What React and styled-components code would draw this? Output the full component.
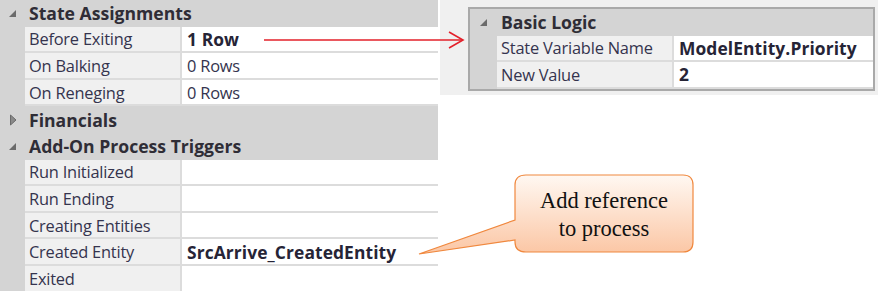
import styled, { createGlobalStyle } from 'styled-components'

const GlobalStyle = createGlobalStyle`
    html, body {
        margin: 0;
        padding: 0;
        background: #ffffff;
    }
    body {
        font-family: "Open Sans", "Noto Sans", sans-serif;
    }
`

const Page = styled.div`
    position: relative;
    width: 878px;
    height: 291px;
    overflow: hidden;
    display: flex;
    align-items: flex-start;
    gap: 2px;
    background: #ffffff;
`

const Grid = styled.div`
    width: ${({ width }) => width};
    background: #d4d4d4;
    display: flex;
    flex-direction: column;
`

const RightArea = styled.div`
    flex: 1;
    background: #f0f0f0;
    padding: 7px 3px 4px 28px;
`

const Frame = styled.div`
    border: 2px solid #a9a9a9;
`

const Header = styled.div`
    height: 26.6px;
    display: flex;
    align-items: center;
    font-weight: 700;
    font-size: 17.6px;
    color: #2f2d36;
    letter-spacing: 0;
    white-space: nowrap;
`

const Toggle = styled.span`
    width: ${({ gutter }) => gutter + 4}px;
    display: flex;
    justify-content: center;
    padding-right: 4px;
    box-sizing: border-box;
`

const Row = styled.div`
    margin-left: ${({ gutter }) => gutter}px;
    height: 26.6px;
    box-sizing: border-box;
    display: grid;
    grid-template-columns: ${({ labelWidth }) => labelWidth} 1fr;
    column-gap: 2px;
    background: #dcdcdc;
    border-bottom: 2px solid #dcdcdc;
`

const Label = styled.div`
    background: #f0f0f0;
    display: flex;
    align-items: center;
    padding-left: 4px;
    font-size: 16.4px;
    color: #35344e;
    letter-spacing: -0.2px;
    white-space: nowrap;
`

const Value = styled.div`
    background: #ffffff;
    display: flex;
    align-items: center;
    padding-left: 5px;
    font-size: ${({ bold }) => (bold ? '17.4px' : '16.4px')};
    font-weight: ${({ bold }) => (bold ? 700 : 400)};
    color: ${({ bold }) => (bold ? '#262436' : '#35344e')};
    letter-spacing: ${({ bold }) => (bold ? '0.1px' : '-0.2px')};
    white-space: nowrap;
`

const Overlay = styled.svg`
    position: absolute;
    left: 0;
    top: 0;
    pointer-events: none;
`

const CalloutText = styled.div`
    position: absolute;
    left: 515px;
    top: 187px;
    width: 178px;
    text-align: center;
    font-family: "Liberation Serif", "Times New Roman", serif;
    font-size: 22.5px;
    line-height: 28px;
    color: #111111;
`

const Expanded = () => (
    <svg width="9" height="9" viewBox="0 0 9 9">
        <path d="M8 1 L8 8 L1 8 Z" fill="#6b6b6b" />
    </svg>
)

const Collapsed = () => (
    <svg width="8" height="12" viewBox="0 0 8 12">
        <path d="M1.5 1 L7 6 L1.5 11 Z" fill="#8a8a8a" stroke="#6b6b6b" strokeWidth="1" />
    </svg>
)

const Section = ({ title, open = true, gutter = 25 }) => (
    <Header>
        <Toggle gutter={gutter}>{open ? <Expanded /> : <Collapsed />}</Toggle>
        {title}
    </Header>
)

const Prop = ({ label, value, bold, labelWidth = '155px', gutter = 25 }) => (
    <Row labelWidth={labelWidth} gutter={gutter}>
        <Label>{label}</Label>
        <Value bold={bold}>{value}</Value>
    </Row>
)

const App = () => {
    return (
        <>
            <GlobalStyle />
            <Page>
                <Grid width="438px">
                    <Section title="State Assignments" />
                    <Prop label="Before Exiting" value="1 Row" bold />
                    <Prop label="On Balking" value="0 Rows" />
                    <Prop label="On Reneging" value="0 Rows" />
                    <Section title="Financials" open={false} />
                    <Section title="Add-On Process Triggers" />
                    <Prop label="Run Initialized" value="" />
                    <Prop label="Run Ending" value="" />
                    <Prop label="Creating Entities" value="" />
                    <Prop label="Created Entity" value="SrcArrive_CreatedEntity" bold />
                    <Prop label="Exited" value="" />
                </Grid>
                <RightArea>
                    <Frame>
                        <Grid width="100%">
                            <Section title="Basic Logic" gutter={27} />
                            <Prop label="State Variable Name" value="ModelEntity.Priority" bold labelWidth="175px" gutter={27} />
                            <Prop label="New Value" value="2" bold labelWidth="175px" gutter={27} />
                        </Grid>
                    </Frame>
                </RightArea>

                <Overlay width="878" height="291">
                    <defs>
                        <linearGradient id="calloutFill" x1="0" y1="0" x2="0" y2="1">
                            <stop offset="0" stopColor="#fff8f2" />
                            <stop offset="1" stopColor="#fbc6a4" />
                        </linearGradient>
                    </defs>
                    <line x1="264" y1="40" x2="462" y2="40" stroke="#e3202a" strokeWidth="1.6" />
                    <polyline points="449,32 463,40 449,48" fill="none" stroke="#e3202a" strokeWidth="1.6" />
                    <path
                        d="M526 175 H683 Q693 175 693 185 V242 Q693 252 683 252 H526 Q515 252 515 242 V240 L419 254 L515 220 V185 Q515 175 526 175 Z"
                        fill="url(#calloutFill)"
                        stroke="#f0883e"
                        strokeWidth="1.2"
                    />
                </Overlay>
                <CalloutText>
                    Add reference
                    <br />
                    to process
                </CalloutText>
            </Page>
        </>
    )
}

export default App
